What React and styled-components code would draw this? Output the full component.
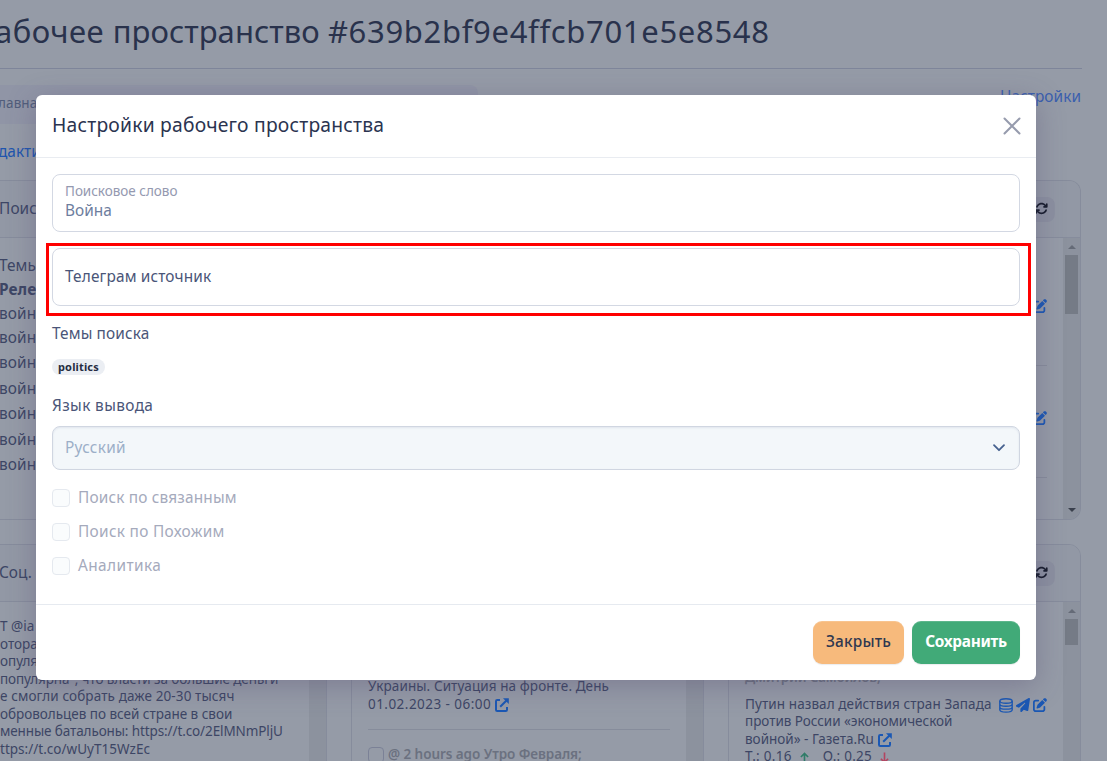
import React from "react";
import styled, { createGlobalStyle } from "styled-components";
import { FaPenToSquare, FaArrowsRotate, FaPaperPlane } from "react-icons/fa6";

const Global = createGlobalStyle`
  * { box-sizing: border-box; }
  html, body { margin: 0; height: 100%; overflow: hidden; }
  body { background: #959ba7; font: 15.4px/24px "Noto Sans", "Open Sans", sans-serif; color: #3d4665; }
`;

const Text = styled.span`
  letter-spacing: ${(p) => p.$ls || 0}px;
  white-space: nowrap;
`;

const Page = styled.div`
  position: relative;
  width: 1107px;
  height: 761px;
  overflow: hidden;
`;
const Content = styled.div`width: 1081px;`;
const Title = styled.h1`
  margin: 0 -1px 0 0;
  height: 69px;
  padding-top: 10px;
  border-bottom: 1px solid #7e859a;
  font-size: 31px;
  line-height: 42px;
  font-weight: 400;
  color: #29324c;
  white-space: nowrap;
  text-indent: -5px;
`;
const TopRow = styled.div`
  display: flex;
  justify-content: space-between;
  padding-top: 16px;
  height: 55px;
`;
const Crumbs = styled.nav`
  width: 480px;
  height: 39px;
  padding-top: 6px;
  margin-left: -2px;
  border-radius: 0 8px 8px 0;
  background: #9095a6;
  font-size: 13.5px;
  color: #515d7b;
`;
const Link = styled.a`
  color: ${(p) => (p.$muted ? "#3b5fae" : "#2055ae")};
`;
const EditRow = styled.div`
  height: 56px;
  padding-top: 16px;
  margin-left: -2px;
`;

const Card = styled.section`
  display: flex;
  flex-direction: column;
  height: ${(p) => p.$h}px;
  border: 1px solid #868c9c;
  border-left-width: ${(p) => (p.$cut ? 0 : 1)}px;
  border-radius: ${(p) => (p.$cut ? "0 12px 12px 0" : "12px")};
  overflow: hidden;
`;
const CardHead = styled.header`
  display: flex;
  align-items: center;
  justify-content: space-between;
  flex: none;
  height: 57px;
  padding-right: 25px;
  border-bottom: 1px solid #868c9c;
  background: #9298a5;
  text-indent: -1px;
`;
const RefreshButton = styled.span`
  display: flex;
  align-items: center;
  justify-content: center;
  width: 28px;
  height: 25px;
  padding-bottom: 1px;
  border-radius: 8px;
  background: #8b90a0;
  color: #151b2b;
  font-size: 13px;
`;
const CardBody = styled.div`
  flex: 1;
  display: flex;
  justify-content: space-between;
  min-height: 0;
`;
const TopicList = styled.div`
  padding-top: 15px;
  line-height: 25.4px;
  text-indent: -1px;
`;
const TopicLine = styled.div`
  height: ${(p) => p.$h || 25.4}px;
  font-weight: ${(p) => (p.$bold ? 700 : 400)};
  letter-spacing: 0.1px;
  white-space: nowrap;
`;
const ActionColumn = styled.div`
  display: flex;
  flex-direction: column;
  align-items: flex-end;
  flex: 1;
  padding-right: 16px;
  color: #1b58b4;
  font-size: 14px;
`;
const ActionCell = styled.div`
  height: ${(p) => p.$h}px;
  padding-top: ${(p) => p.$top}px;
  width: 60px;
  text-align: right;
  line-height: 0;
  border-bottom: 1px solid #878d9b;
`;

const Scroll = styled.div`
  display: flex;
  flex-direction: column;
  align-items: center;
  flex: none;
  width: 17px;
  background: #8c929e;
`;
const Thumb = styled.div`
  width: 13px;
  height: ${(p) => p.$h}px;
  background: #757b86;
`;
const Arrow = styled.div`
  width: 0;
  height: 0;
  margin: ${(p) => (p.$down ? "auto 0 7px" : "7px 0 6px")};
  border: 4px solid transparent;
  border-${(p) => (p.$down ? "top" : "bottom")}-color: ${(p) => (p.$down ? "#3a404d" : "#656b77")};
  border-${(p) => (p.$down ? "bottom" : "top")}-width: 0;
`;

const Columns = styled.div`
  display: grid;
  grid-template-columns: 327px 353px 353px;
  column-gap: 24px;
  padding-top: 24px;
`;
const Feed = styled.div`
  flex: 1;
  min-width: 0;
  padding: ${(p) => p.$pad};
  font-size: 13.5px;
  line-height: 17.5px;
  white-space: nowrap;
`;
const FeedLine = styled.div`
  display: flex;
  align-items: center;
  height: 17.5px;
`;
const FeedMeta = styled(FeedLine)`
  color: #6b7180;
  font-weight: 600;
`;
const Rule = styled.div`
  height: 1px;
  margin: 16px 0 16px;
  background: #868c9b;
`;
const FeedCheck = styled.span`
  width: 16px;
  height: 16px;
  margin-right: 4px;
  border: 1px solid #7b8196;
  border-radius: 4px;
`;
const IconGroup = styled.span`
  display: flex;
  gap: 3px;
  align-items: center;
  margin: 2px 0 0 auto;
  color: #1b58b4;
  font-size: 14px;
`;
const IconSvg = styled.svg`
  flex: none;
  margin-left: ${(p) => p.$ml || 0}px;
  overflow: visible;
`;
const Gap = styled.span`width: 14px;`;

const Dialog = styled.div`
  position: absolute;
  left: 36px;
  top: 95px;
  width: 1000px;
  height: 585px;
  display: flex;
  flex-direction: column;
  background: #fff;
  border-radius: 6px;
  box-shadow: 0 6px 28px rgba(80, 70, 110, 0.35);
`;
const DialogHead = styled.header`
  display: flex;
  justify-content: space-between;
  align-items: center;
  height: 63px;
  padding: 0 15px 1px 16px;
  border-bottom: 1px solid #e9ecf1;
  font-size: 19.3px;
  color: #2b3450;

  & > span { padding-bottom: 2px; }
`;
const DialogBody = styled.div`
  flex: 1;
  display: flex;
  flex-direction: column;
  padding: 16px;
`;
const Field = styled.div`
  display: flex;
  flex-direction: column;
  justify-content: center;
  height: 58px;
  padding: ${(p) => (p.$filled ? "0 12px 3px" : "0 12px")};
  border: 1px solid #d3d8e3;
  border-radius: 8px;
  color: ${(p) => (p.$filled ? "#6d7d9e" : "#4a5578")};
  line-height: 20px;
`;
const FieldCaption = styled.span`
  font-size: 13.5px;
  line-height: 19px;
  color: #9499b0;
`;
const Highlight = styled.div`
  margin: 11px -11px 0 -6px;
  padding: 2px 8px 7px 3px;
  border: 3px solid #ff0000;
`;
const Label = styled.div`
  margin-top: ${(p) => p.$top}px;
  color: #4a5578;
`;
const Badge = styled.span`
  align-self: flex-start;
  margin-top: 13px;
  height: 16px;
  padding: 0 6px;
  border-radius: 8px;
  background: #ebeef3;
  color: #252d42;
  font-size: 11px;
  font-weight: 700;
  letter-spacing: 0.15px;
  line-height: 16px;
`;
const Select = styled.div`
  display: flex;
  align-items: center;
  justify-content: space-between;
  height: 44px;
  margin-top: 8px;
  padding: 0 14px 0 12px;
  border: 1px solid #d0d6e1;
  border-radius: 8px;
  background: #f3f7fa;
  box-shadow: inset 0 1px 2px rgba(90, 110, 150, 0.12);
  color: #9cafc8;
`;
const Checks = styled.div`
  display: flex;
  flex-direction: column;
  gap: 10px;
  margin-top: 16px;
`;
const CheckRow = styled.label`
  display: flex;
  align-items: center;
  gap: 8px;
  height: 24px;
  color: #a5aabc;
`;
const CheckBox = styled.span`
  width: 18px;
  height: 18px;
  border: 1px solid #e5e9ef;
  border-radius: 4px;
  background: #fafcfd;
`;
const DialogFoot = styled.footer`
  display: flex;
  justify-content: flex-end;
  gap: 8px;
  height: 76px;
  padding: 16px;
  border-top: 1px solid #e6eaf0;
`;
const Button = styled.button`
  width: ${(p) => p.$w}px;
  height: 43px;
  padding: 0 0 1px;
  border: 0;
  border-radius: 9px;
  background: ${(p) => p.$bg};
  color: ${(p) => p.$fg};
  font: inherit;
  font-weight: ${(p) => p.$weight};
  box-shadow: inset 0 1px 0 rgba(255, 255, 255, 0.15), 0 1px 1px rgba(60, 70, 90, 0.1);
`;

const External = () => (
  <IconSvg $ml={4} width="14" height="14" viewBox="0 -1 14 14" fill="none" stroke="#1b58b4" strokeWidth="2">
    <path d="M5 2H2.2Q1 2 1 3.2V11.8Q1 13 2.2 13H10.8Q12 13 12 11.8V9M5.2 8.8L11.5 2.5" />
    <path d="M8 0.2H13.8V6Z" fill="#1b58b4" stroke="none" />
  </IconSvg>
);
const Database = () => (
  <IconSvg width="14" height="15" viewBox="0 0 14 16" preserveAspectRatio="none" fill="none" stroke="#1b58b4" strokeWidth="1.4">
    <ellipse cx="7" cy="3.2" rx="6.2" ry="2.4" />
    <path d="M.8 3.2V12.6C.8 16 13.2 16 13.2 12.6V3.2M.8 6.4C.8 9.6 13.2 9.6 13.2 6.4M.8 9.5C.8 12.7 13.2 12.7 13.2 9.5" />
  </IconSvg>
);
const Trend = ({ down }) => (
  <IconSvg $ml={8} width="9" height="12" viewBox="0 -1 10 12" fill="none" stroke={down ? "#b34460" : "#2f7c68"} strokeWidth="1.8">
    <path d={down ? "M5 0V11M1 7L5 11L9 7" : "M5 12V1.2M1 5L5 1L9 5"} />
  </IconSvg>
);

const ScrollBar = ({ thumb, down }) => (
  <Scroll>
    <Arrow />
    <Thumb $h={thumb} />
    {down && <Arrow $down />}
  </Scroll>
);

const topicHeights = [24, 25, 25.5, 25.5, 25.5, 25.5, 25.5];

export default function App() {
  return (
    <Page>
      <Global />
      <Content>
        <Title>
          <Text $ls={0.48}>абочее </Text>
          <Text $ls={0.05}>пространство </Text>
          <Text $ls={0.68}>#639b2bf9e4ffcb701e5e8548</Text>
        </Title>
        <TopRow>
          <Crumbs><Text $ls={0.1}>лавная</Text></Crumbs>
          <Link $muted><Text $ls={0.05}>Настройки</Text></Link>
        </TopRow>
        <EditRow><Link><Text>дакти</Text></Link></EditRow>
        <Card $h={340} $cut>
          <CardHead><Text $ls={0.1}>Поиск</Text><RefreshButton><FaArrowsRotate /></RefreshButton></CardHead>
          <CardBody>
            <TopicList>
              <TopicLine $h={24}>Темы</TopicLine>
              <TopicLine $h={24} $bold>Реле</TopicLine>
              {topicHeights.map((h, i) => <TopicLine key={i} $h={h}>война</TopicLine>)}
            </TopicList>
            <ActionColumn>
              <ActionCell $h={128} $top={61}><FaPenToSquare /></ActionCell>
              <ActionCell $h={112} $top={45}><FaPenToSquare /></ActionCell>
            </ActionColumn>
            <ScrollBar thumb={59} down />
          </CardBody>
        </Card>
        <Columns>
          <Card $h={340} $cut>
            <CardHead><Text>Соц.</Text></CardHead>
            <CardBody>
              <Feed $pad="16px 0 0">
                <FeedLine>T @ia</FeedLine>
                <FeedLine>отора</FeedLine>
                <FeedLine>опуля</FeedLine>
                <FeedLine><Text $ls={-0.1}>популярна", что власти за большие деньги</Text></FeedLine>
                <FeedLine><Text $ls={0.12}>е смогли собрать даже 20-30 тысяч</Text></FeedLine>
                <FeedLine><Text $ls={-0.02}>обровольцев по всей стране в свои</Text></FeedLine>
                <FeedLine><Text $ls={-0.11}>менные батальоны: https://t.co/2ElMNmPljU</Text></FeedLine>
                <FeedLine><Text $ls={0.02}>ttps://t.co/wUyT15WzEc</Text></FeedLine>
              </Feed>
              <ScrollBar thumb={26} />
            </CardBody>
          </Card>
          <Card $h={340}>
            <CardHead />
            <CardBody>
              <Feed $pad="76px 16px 0">
                <FeedLine><Text $ls={0.09}>Украины. Ситуация на фронте. День</Text></FeedLine>
                <FeedLine><Text $ls={0.46}>01.02.2023 - 06:00</Text><External /></FeedLine>
                <Rule />
                <FeedMeta><FeedCheck /><Text $ls={-0.07}>@ 2 hours ago Утро Февраля;</Text></FeedMeta>
              </Feed>
              <ScrollBar thumb={26} />
            </CardBody>
          </Card>
          <Card $h={340}>
            <CardHead><span /><RefreshButton><FaArrowsRotate /></RefreshButton></CardHead>
            <CardBody>
              <Feed $pad="67px 16px 0 16px">
                <FeedMeta><Text $ls={-0.2}>Дмитрий Самойлов;</Text></FeedMeta>
                <Feed $pad="9px 0 0">
                  <FeedLine>
                    <Text $ls={0.09}>Путин назвал действия стран Запада</Text>
                    <IconGroup><Database /><FaPaperPlane /><FaPenToSquare /></IconGroup>
                  </FeedLine>
                  <FeedLine><Text $ls={-0.04}>против России «экономической</Text></FeedLine>
                  <FeedLine><Text $ls={0}>войной» - Газета.Ru</Text><External /></FeedLine>
                  <FeedLine>
                    <Text $ls={0.3}>Т.: 0.16</Text><Trend />
                    <Gap />
                    <Text $ls={0.25}>О.: 0.25</Text><Trend down />
                  </FeedLine>
                </Feed>
              </Feed>
              <ScrollBar thumb={26} />
            </CardBody>
          </Card>
        </Columns>
      </Content>

      <Dialog>
        <DialogHead>
          <Text $ls={0.22}>Настройки рабочего пространства</Text>
          <IconSvg width="18" height="18" viewBox="0 0 18 18" stroke="#969bad" strokeWidth="2">
            <path d="M1.5 1.5L16.5 16.5M16.5 1.5L1.5 16.5" strokeLinecap="round" />
          </IconSvg>
        </DialogHead>
        <DialogBody>
          <Field $filled>
            <FieldCaption><Text $ls={-0.02}>Поисковое слово</Text></FieldCaption>
            <Text>Война</Text>
          </Field>
          <Highlight>
            <Field><Text $ls={0.15}>Телеграм источник</Text></Field>
          </Highlight>
          <Label $top={6}><Text $ls={0.13}>Темы поиска</Text></Label>
          <Badge>politics</Badge>
          <Label $top={19}><Text $ls={0.38}>Язык вывода</Text></Label>
          <Select>
            <Text $ls={0.25}>Русский</Text>
            <IconSvg width="12" height="8" viewBox="0 0 12 8" fill="none" stroke="#46618f" strokeWidth="1.8">
              <path d="M1 1.2L6 6.2L11 1.2" strokeLinecap="round" strokeLinejoin="round" />
            </IconSvg>
          </Select>
          <Checks>
            <CheckRow><CheckBox /><Text $ls={0.16}>Поиск по связанным</Text></CheckRow>
            <CheckRow><CheckBox /><Text $ls={0.31}>Поиск по Похожим</Text></CheckRow>
            <CheckRow><CheckBox /><Text $ls={0.42}>Аналитика</Text></CheckRow>
          </Checks>
        </DialogBody>
        <DialogFoot>
          <Button $w={91} $bg="#f7ba7c" $fg="#303850" $weight={500}><Text $ls={0.2}>Закрыть</Text></Button>
          <Button $w={108} $bg="#41aa78" $fg="#ffffff" $weight={700}><Text $ls={-0.3}>Сохранить</Text></Button>
        </DialogFoot>
      </Dialog>
    </Page>
  );
}
